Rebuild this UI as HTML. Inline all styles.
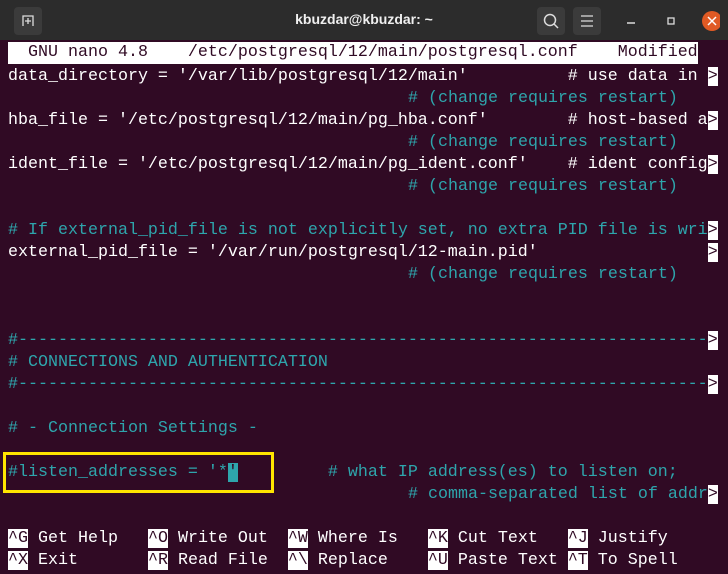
<!DOCTYPE html>
<html><head><meta charset="utf-8"><style>
*{margin:0;padding:0;box-sizing:border-box}
body{width:728px;height:574px;overflow:hidden;background:#300a24;position:relative;font-family:"Liberation Mono",monospace}
#tb{position:absolute;left:0;top:0;width:728px;height:40px;background:#2c2c2c}
.btn{position:absolute;top:7px;width:28px;height:28px;background:#3b3b3b;border-radius:4px}
.title{position:absolute;top:11px;left:0;width:728px;text-align:center;color:#f0f0f0;font:bold 14px "Liberation Sans",sans-serif}
.t{position:absolute;font-size:16.67px;line-height:22px;height:22px;white-space:pre;color:#ffffff;margin-top:1px}
.c{color:#2ea5ac}
.inv{background:#ffffff;color:#300a24}
</style></head><body>
<div id="tb">
 <div class="btn" style="left:14px"><svg width="28" height="28"><path d="M9 19V9h10v10" fill="none" stroke="#ddd" stroke-width="1.3"/><path d="M14 11v6M11 14h6" stroke="#ddd" stroke-width="1.3"/></svg></div>
 <div class="title">kbuzdar@kbuzdar: ~</div>
 <div class="btn" style="left:537px"><svg width="28" height="28"><circle cx="13" cy="13" r="5.5" fill="none" stroke="#ddd" stroke-width="1.5"/><path d="M17 17l4 4" stroke="#ddd" stroke-width="1.5"/></svg></div>
 <div class="btn" style="left:573px"><svg width="28" height="28"><path d="M8 9h12M8 14h12M8 19h12" stroke="#ddd" stroke-width="1.3"/></svg></div>
 <svg style="position:absolute;left:620px;top:10px" width="100" height="24"><path d="M7 13h8" stroke="#ddd" stroke-width="1.5"/><rect x="48" y="8" width="6" height="6" fill="none" stroke="#ddd" stroke-width="1.3"/><circle cx="92" cy="11" r="10" fill="#e05a24"/><path d="M88 7l8 8M96 7l-8 8" stroke="#fff" stroke-width="1.5"/></svg>
</div>
<div class="t inv" style="top:42px;left:8px;width:690px;margin-top:0">  GNU nano 4.8    /etc/postgresql/12/main/postgresql.conf    Modified</div>
<div class="t" style="top:65px;left:8px">data_directory = '/var/lib/postgresql/12/main'          # use data in <span class="inv">&gt;</span></div>
<div class="t c" style="top:87px;left:408px"># (change requires restart)</div>
<div class="t" style="top:109px;left:8px">hba_file = '/etc/postgresql/12/main/pg_hba.conf'        # host-based a<span class="inv">&gt;</span></div>
<div class="t c" style="top:131px;left:408px"># (change requires restart)</div>
<div class="t" style="top:153px;left:8px">ident_file = '/etc/postgresql/12/main/pg_ident.conf'    # ident config<span class="inv">&gt;</span></div>
<div class="t c" style="top:175px;left:408px"># (change requires restart)</div>
<div class="t" style="top:219px;left:8px"><span class="c"># If external_pid_file is not explicitly set, no extra PID file is wri</span><span class="inv">&gt;</span></div>
<div class="t" style="top:241px;left:8px">external_pid_file = '/var/run/postgresql/12-main.pid'                 <span class="inv">&gt;</span></div>
<div class="t c" style="top:263px;left:408px"># (change requires restart)</div>
<div class="t" style="top:329px;left:8px"><span class="c">#---------------------------------------------------------------------</span><span class="inv">&gt;</span></div>
<div class="t c" style="top:351px;left:8px"># CONNECTIONS AND AUTHENTICATION</div>
<div class="t" style="top:373px;left:8px"><span class="c">#---------------------------------------------------------------------</span><span class="inv">&gt;</span></div>
<div class="t c" style="top:417px;left:8px"># - Connection Settings -</div>
<div class="t c" style="top:461px;left:8px">#listen_addresses = '*<span style="background:#2ea5ac;color:#300a24">'</span>         # what IP address(es) to listen on;</div>
<div class="t" style="top:483px;left:408px"><span class="c"># comma-separated list of addr</span><span class="inv">&gt;</span></div>
<div style="position:absolute;left:3px;top:452px;width:271px;height:41px;border:3px solid #ffe500"></div>
<div class="t" style="top:527px;left:8px"><span class="inv">^G</span> Get Help   <span class="inv">^O</span> Write Out  <span class="inv">^W</span> Where Is   <span class="inv">^K</span> Cut Text   <span class="inv">^J</span> Justify</div>
<div class="t" style="top:549px;left:8px"><span class="inv">^X</span> Exit       <span class="inv">^R</span> Read File  <span class="inv">^\</span> Replace    <span class="inv">^U</span> Paste Text <span class="inv">^T</span> To Spell</div>
</body></html>
